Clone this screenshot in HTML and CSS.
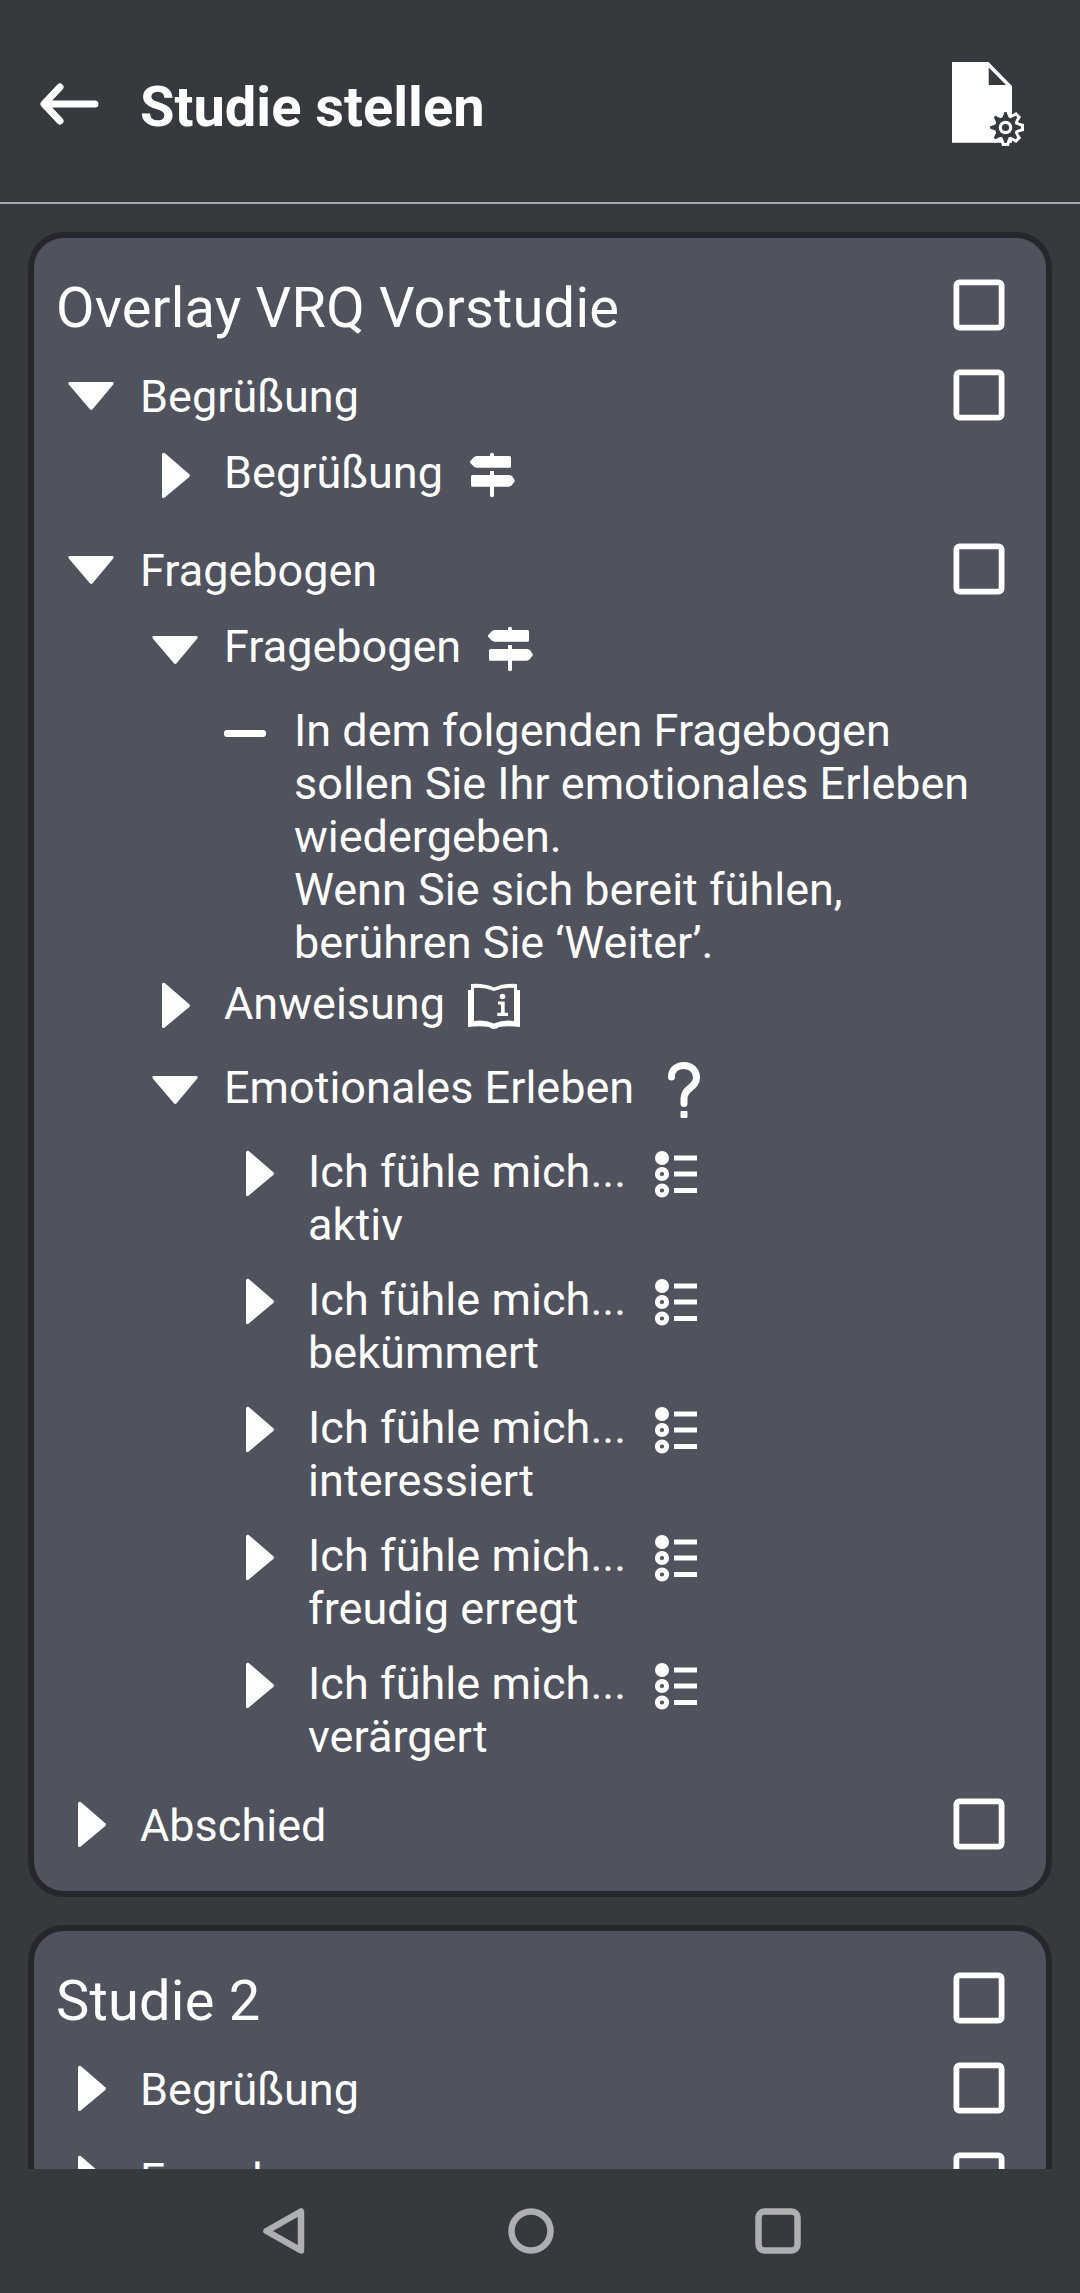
FILE: index.html
```
<!DOCTYPE html>
<html lang="de">
<head>
<meta charset="utf-8">
<title>Studie stellen</title>
<link rel="stylesheet" href="styles.css">
</head>
<body>
<svg class="sprite" aria-hidden="true">
  <symbol id="open" viewBox="0 0 70 70"><path d="M14 22H56Q58.600 22 57.200 24.400L36.800 49Q35.300 50.800 33.700 49L12.800 24.400Q11.500 22 14 22Z"/></symbol>
  <symbol id="closed" viewBox="0 0 70 70"><path d="M22 14.500Q22 11.800 24.700 13L49.300 34.300Q50.700 35.700 49.300 37L24.700 57.500Q22 59 22 56.500Z"/></symbol>
  <symbol id="sign" viewBox="0 0 70 70"><path d="M33 16V14.500Q33 12.700 35 12.700T37 14.500V16H52.500Q54 16 54 17.500V26.200Q54 27.700 52.500 27.700H19.500L17 26.700L13.300 23Q12.500 22 13.300 21L17 17L19.500 16ZM33 35V31H37V35H52.500L55 36L57.300 39.500Q58.200 41 57.300 42L54.500 45.500L52 46.700H37V55.500Q37 57.300 35 57.300T33 55.500V46.700H15.500Q14 46.700 14 45.200V36.500Q14 35 15.500 35Z"/></symbol>
  <symbol id="book" viewBox="0 0 70 70"><path fill-rule="evenodd" d="M12 14Q25 13 35 17.500Q45 13 58 14V20H61V57Q49 55.500 40 57Q38 59 35 59T30 57Q21 55.500 9 57V20H12ZM15 18V51Q26 49.500 35 53.500Q44 49.500 55 51V18Q45 17 35 21Q25 17 15 18Z"/><circle cx="43.500" cy="26.500" r="2.800"/><path d="M39 31.500H45.700V42.700H49V46H38.300V42.700H42V34.500H39Z"/></symbol>
  <symbol id="question" viewBox="0 0 70 70"><path d="M22.500 23C22.500 15.500 28 11.500 35 11.500C42.500 11.500 47.500 17 47.500 23.500C47.500 34 35 33.500 35 44.500V49.500" fill="none" stroke="#fff" stroke-width="7" stroke-linecap="round"/><rect x="31.500" y="57" width="7" height="7" rx="1"/></symbol>
  <symbol id="list" viewBox="0 0 70 70"><circle cx="21" cy="20" r="7"/><g fill="none" stroke="#fff" stroke-width="5"><circle cx="21" cy="36" r="4.600"/><circle cx="21" cy="52.500" r="4.600"/><path d="M33 20H56M33 36H56M33 52.500H56"/></g></symbol>
  <symbol id="box" viewBox="0 0 70 70"><rect x="12.400" y="12.400" width="45.200" height="45.200" rx="3" fill="none" stroke="#fff" stroke-width="5.800"/></symbol>
</svg>
<div class="screen">
  <header class="bar">
    <svg class="back" viewBox="0 0 60 44"><path d="M20 5L4 22L20 39M5 22H55" fill="none" stroke="#fff" stroke-width="7" stroke-linecap="round" stroke-linejoin="round"/></svg>
    <h1>Studie stellen</h1>
    <svg class="doc" viewBox="0 0 76 88">
      <path fill-rule="evenodd" d="M2 2H38.500L62 26V82.700H2ZM38.700 7.500V25H56Z"/>
      <g transform="translate(55.500 67.500)">
        <g>
          <path d="M-5 -12L-3.500 -18.500H3.500L5 -12ZM-5 12L-3.500 18.500H3.500L5 12ZM-12 -5L-18.500 -3.500V3.500L-12 5ZM12 -5L18.500 -3.500V3.500L12 5Z"/>
          <path transform="rotate(45)" d="M-5 -12L-3.500 -18.500H3.500L5 -12ZM-5 12L-3.500 18.500H3.500L5 12ZM-12 -5L-18.500 -3.500V3.500L-12 5ZM12 -5L18.500 -3.500V3.500L12 5Z"/>
        </g>
        <circle r="14"/>
        <g class="cut">
          <circle r="10.500"/>
          <path d="M-3.500 -9L-1 -15.500H1L3.500 -9ZM-3.500 9L-1 15.500H1L3.500 9ZM-9 -3.500L-15.500 -1V1L-9 3.500ZM9 -3.500L15.500 -1V1L9 3.500Z"/>
          <path transform="rotate(45)" d="M-3.500 -9L-1 -15.500H1L3.500 -9ZM-3.500 9L-1 15.500H1L3.500 9ZM-9 -3.500L-15.500 -1V1L-9 3.500ZM9 -3.500L15.500 -1V1L9 3.500Z"/>
        </g>
        <circle r="6.800"/><circle class="cut" r="3.600"/>
      </g>
    </svg>
  </header>

  <main class="studies">
    <section class="card">
      <div class="row title"><h2>Overlay VRQ Vorstudie</h2><svg class="icon check"><use href="#box"/></svg></div>
      <div class="row"><svg class="icon"><use href="#open"/></svg><span class="label">Begrüßung</span><svg class="icon check"><use href="#box"/></svg></div>
      <div class="children">
        <div class="item"><svg class="icon"><use href="#closed"/></svg><p>Begrüßung</p><svg class="icon kind"><use href="#sign"/></svg></div>
      </div>
      <div class="row"><svg class="icon"><use href="#open"/></svg><span class="label">Fragebogen</span><svg class="icon check"><use href="#box"/></svg></div>
      <div class="children">
        <div class="item"><svg class="icon"><use href="#open"/></svg><p>Fragebogen</p><svg class="icon kind"><use href="#sign"/></svg></div>
        <div class="note"><span class="dash"></span><p>In dem folgenden Fragebogen<br>sollen Sie Ihr emotionales Erleben<br>wiedergeben.<br>Wenn Sie sich bereit fühlen,<br>berühren Sie ‘Weiter’.</p></div>
        <div class="item lower"><svg class="icon"><use href="#closed"/></svg><p>Anweisung</p><svg class="icon kind"><use href="#book"/></svg></div>
        <div class="item lower"><svg class="icon"><use href="#open"/></svg><p>Emotionales Erleben</p><svg class="icon kind wide"><use href="#question"/></svg></div>
        <div class="children questions">
          <div class="item lower"><svg class="icon"><use href="#closed"/></svg><p>Ich fühle mich...<br>aktiv</p><svg class="icon kind wide"><use href="#list"/></svg></div>
          <div class="item lower"><svg class="icon"><use href="#closed"/></svg><p>Ich fühle mich...<br>bekümmert</p><svg class="icon kind wide"><use href="#list"/></svg></div>
          <div class="item lower"><svg class="icon"><use href="#closed"/></svg><p>Ich fühle mich...<br>interessiert</p><svg class="icon kind wide"><use href="#list"/></svg></div>
          <div class="item lower"><svg class="icon"><use href="#closed"/></svg><p>Ich fühle mich...<br>freudig erregt</p><svg class="icon kind wide"><use href="#list"/></svg></div>
          <div class="item lower"><svg class="icon"><use href="#closed"/></svg><p>Ich fühle mich...<br>verärgert</p><svg class="icon kind wide"><use href="#list"/></svg></div>
        </div>
      </div>
      <div class="row"><svg class="icon"><use href="#closed"/></svg><span class="label">Abschied</span><svg class="icon check"><use href="#box"/></svg></div>
    </section>

    <section class="card">
      <div class="row title"><h2>Studie 2</h2><svg class="icon check"><use href="#box"/></svg></div>
      <div class="row"><svg class="icon"><use href="#closed"/></svg><span class="label">Begrüßung</span><svg class="icon check"><use href="#box"/></svg></div>
      <div class="row"><svg class="icon"><use href="#closed"/></svg><span class="label">Fragebogen</span><svg class="icon check"><use href="#box"/></svg></div>
    </section>
  </main>

  <nav class="system">
    <svg viewBox="0 0 48 48"><path d="M41 4.500V43.500L6.500 24Z"/></svg>
    <svg viewBox="0 0 48 48"><circle cx="24" cy="24" r="19.500"/></svg>
    <svg viewBox="0 0 48 48"><rect x="4.500" y="4.500" width="39" height="39" rx="6"/></svg>
  </nav>
</div>
</body>
</html>
```
FILE: styles.css
```
* {
  box-sizing: border-box;
}

body {
  margin: 0;
  background: #36393d;
  color: #fff;
  font-family: Roboto, "Liberation Sans", sans-serif;
  font-size: 45px;
  line-height: 53px;
}

h1, h2, p {
  margin: 0;
}

svg {
  display: block;
  flex: none;
  fill: #fff;
}

.sprite {
  display: none;
}

.screen {
  display: flex;
  flex-direction: column;
  height: 2293px;
  overflow: hidden;
}

.bar {
  display: flex;
  align-items: center;
  flex: none;
  height: 204px;
  padding: 6px 54px 0 40px;
  border-bottom: 2px solid #a6a8b1;
}

.back {
  width: 60px;
  height: 44px;
}

.bar h1 {
  flex: 1;
  margin-left: 40px;
  padding-top: 6px;
  font-size: 56px;
  line-height: 66px;
  font-weight: 700;
}

.doc {
  width: 76px;
  height: 88px;
}

.cut {
  fill: #36393d;
}

.studies {
  display: flex;
  flex-direction: column;
  gap: 28px;
  flex: 1;
  min-height: 0;
  padding: 28px 28px 0;
  overflow: hidden;
}

.card {
  flex: none;
  padding: 22px 32px 22px 22px;
  background: #50525d;
  border: 6px solid #25272c;
  border-radius: 36px;
}

.row {
  display: flex;
  align-items: center;
  height: 90px;
}

.row h2 {
  padding-top: 6px;
  font-size: 56px;
  line-height: 66px;
  font-weight: 400;
  letter-spacing: 0.2px;
}

.icon {
  width: 70px;
  height: 70px;
}

.label {
  margin-left: 14px;
  padding-top: 3px;
}

.check {
  margin-left: auto;
}

.children {
  padding-left: 84px;
}

.item {
  display: flex;
  align-items: flex-start;
  margin-bottom: 14px;
}

.item p {
  margin-left: 14px;
  padding-top: 6px;
}

.item.lower p {
  padding-top: 7px;
}

.kind {
  margin-left: 14px;
}

.kind.wide {
  margin-left: 15px;
}

.questions {
  padding-bottom: 1px;
}

.questions .item {
  height: 114px;
}

.questions p {
  letter-spacing: 0.05px;
}

.note {
  display: flex;
  height: 272px;
  padding: 6px 0 0 84px;
}

.dash {
  flex: none;
  width: 42px;
  height: 7px;
  margin: 26px 28px 0 0;
  border-radius: 3px;
  background: #fff;
}

.system {
  display: flex;
  align-items: center;
  gap: 199px;
  flex: none;
  height: 124px;
  padding-left: 260px;
}

.system svg {
  width: 48px;
  height: 48px;
  fill: none;
  stroke: #aeafb1;
  stroke-width: 6.500px;
  stroke-linejoin: round;
}
```
